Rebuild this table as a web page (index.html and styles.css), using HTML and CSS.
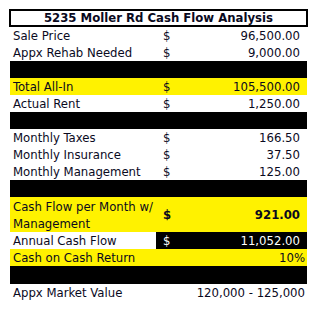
FILE: index.html
```html
<!DOCTYPE html>
<html>
<head>
<meta charset="utf-8">
<link rel="stylesheet" href="styles.css">
</head>
<body>
<div class="sheet">
  <div class="title">5235 Moller Rd Cash Flow Analysis</div>
  <table class="grid">
    <colgroup><col class="c-label"><col class="c-cur"><col class="c-val"></colgroup>
    <tr><td class="lbl">Sale Price</td><td class="cur">$</td><td class="val">96,500.00</td></tr>
    <tr><td class="lbl">Appx Rehab Needed</td><td class="cur">$</td><td class="val">9,000.00</td></tr>
    <tr class="black"><td colspan="3"></td></tr>
    <tr class="yellow"><td class="lbl">Total All-In</td><td class="cur">$</td><td class="val">105,500.00</td></tr>
    <tr><td class="lbl">Actual Rent</td><td class="cur">$</td><td class="val">1,250.00</td></tr>
    <tr class="black"><td colspan="3"></td></tr>
    <tr><td class="lbl">Monthly Taxes</td><td class="cur">$</td><td class="val">166.50</td></tr>
    <tr><td class="lbl">Monthly Insurance</td><td class="cur">$</td><td class="val">37.50</td></tr>
    <tr><td class="lbl">Monthly Management</td><td class="cur">$</td><td class="val">125.00</td></tr>
    <tr class="black"><td colspan="3"></td></tr>
    <tr class="yellow tall"><td class="lbl">Cash Flow per Month w/<br>Management</td><td class="cur bold">$</td><td class="val bold">921.00</td></tr>
    <tr class="annual"><td class="lbl">Annual Cash Flow</td><td class="cur dark">$</td><td class="val dark">11,052.00</td></tr>
    <tr class="yellow"><td class="lbl">Cash on Cash Return</td><td class="cur"></td><td class="val pct">10%</td></tr>
    <tr class="black thick"><td colspan="3"></td></tr>
    <tr><td class="lbl">Appx Market Value</td><td class="cur"></td><td class="val pct">120,000 - 125,000</td></tr>
  </table>
</div>
</body>
</html>
```

FILE: styles.css
```css
html, body {
  margin: 0;
  padding: 0;
  background: #fff;
}
body {
  font-family: "DejaVu Sans Condensed", "DejaVu Sans", sans-serif;
  font-size: 13px;
  color: #0a0a1e;
}
.sheet {
  padding: 9px 0 0 10px;
  width: 297px;
}
.title {
  box-sizing: border-box;
  margin-left: -1px;
  width: 299px;
  height: 18px;
  border: 2px solid #000;
  font-weight: bold;
  text-align: center;
  line-height: 14px;
}
.grid {
  border-collapse: collapse;
  table-layout: fixed;
  width: 297px;
}
.c-label { width: 146px; }
.c-cur { width: 36px; }
.grid td {
  padding: 0;
  height: 17px;
  line-height: 17px;
  white-space: nowrap;
}
.lbl { padding-left: 3px !important; }
.cur { padding-left: 7px !important; }
.val {
  text-align: right;
  padding-right: 7px !important;
}
.val.pct { padding-right: 2px !important; }
.black td { background: #000; }
.thick td { height: 18px; }
.yellow td { background: #fff200; }
.tall td { height: 35px; }
.tall .lbl { line-height: 17px; }
.bold { font-weight: bold; }
.dark { background: #000; color: #fff; }
```
